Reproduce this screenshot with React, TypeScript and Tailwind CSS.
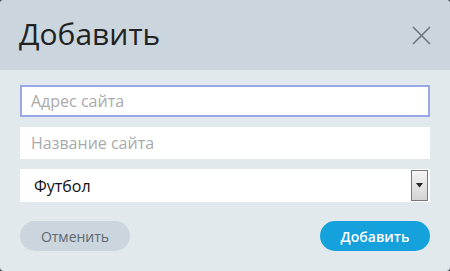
import { useState } from 'react';

export default function App() {
  const [url, setUrl] = useState('');
  const [name, setName] = useState('');
  const [sport, setSport] = useState('Футбол');

  return (
    <div className="w-[450px] h-[271px] bg-[#4a4f55]" style={{ fontFamily: '"Open Sans", "Noto Sans", sans-serif' }}>
      <div className="w-full h-full rounded-[4px] overflow-hidden flex flex-col bg-[#e2e9ed]">
        {/* Header */}
        <div className="h-[70px] bg-[#cbd5dd] flex items-center justify-between pl-[19px] pr-[19px]">
          <h1 className="text-[30px] leading-none text-[#222] font-normal pb-[2px]">Добавить</h1>
          <button className="w-5 h-5 flex items-center justify-center text-[#6b7580]" aria-label="Закрыть">
            <svg width="19" height="19" viewBox="0 0 19 19">
              <path d="M1 1 L18 18 M18 1 L1 18" stroke="currentColor" strokeWidth="1.6" fill="none" />
            </svg>
          </button>
        </div>

        {/* Body */}
        <div className="flex flex-col px-5 pt-[15px]">
          <input
            autoFocus
            value={url}
            onChange={e => setUrl(e.target.value)}
            placeholder="Адрес сайта"
            className="h-[32px] bg-white border-2 border-[#9aa8e8] px-[9px] text-[16px] text-[#222] placeholder:text-[#aaa] outline-none caret-black"
          />
          <input
            value={name}
            onChange={e => setName(e.target.value)}
            placeholder="Название сайта"
            className="mt-[10px] h-[32px] bg-white px-[11px] text-[16px] text-[#222] placeholder:text-[#aaa] outline-none"
          />
          <div className="mt-[10px] h-[33px] bg-white relative flex items-center">
            <select
              value={sport}
              onChange={e => setSport(e.target.value)}
              className="appearance-none w-full h-full bg-transparent pl-[14px] text-[16px] text-[#111] outline-none"
            >
              <option>Футбол</option>
              <option>Хоккей</option>
              <option>Баскетбол</option>
            </select>
            <div className="absolute right-[2px] top-[1px] bottom-[1px] w-[17px] border border-[#777] bg-gradient-to-b from-[#f4f4f4] to-[#d4d4d4] flex items-center justify-center pointer-events-none">
              <svg width="7" height="5" viewBox="0 0 7 5">
                <path d="M0 0 H7 L3.5 4.5 Z" fill="#222" />
              </svg>
            </div>
          </div>

          <div className="mt-[19px] flex justify-between">
            <button className="w-[110px] h-[30px] rounded-full bg-[#cbd5dd] text-[14px] text-[#5d6872]">Отменить</button>
            <button className="w-[110px] h-[30px] rounded-full bg-[#14a1dc] text-[14px] font-semibold text-white">Добавить</button>
          </div>
        </div>
      </div>
    </div>
  );
}
